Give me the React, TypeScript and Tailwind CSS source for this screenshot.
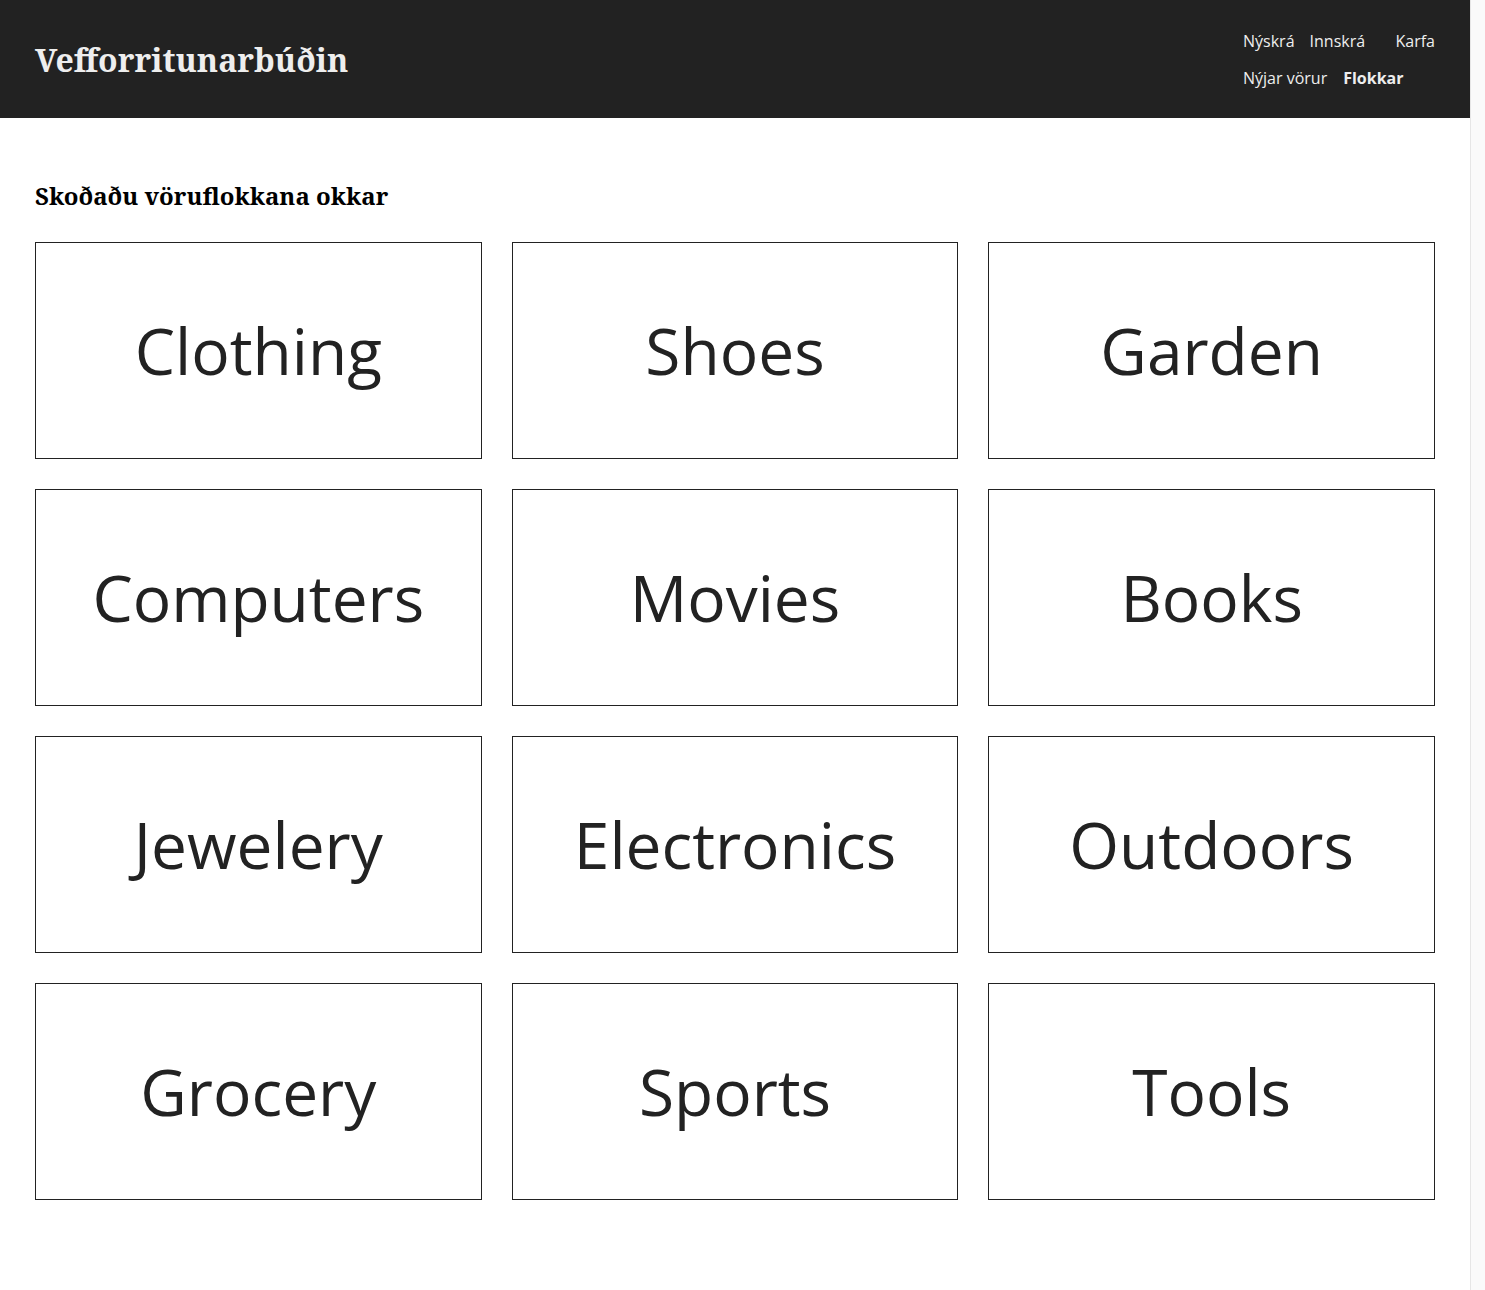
const categories = [
  "Clothing",
  "Shoes",
  "Garden",
  "Computers",
  "Movies",
  "Books",
  "Jewelery",
  "Electronics",
  "Outdoors",
  "Grocery",
  "Sports",
  "Tools",
];

const serif = "font-['Noto_Serif','DejaVu_Serif',serif]";

const Header = () => {
  return (
    <header className="bg-[#222222] h-[118px] px-[35px] flex items-center justify-between text-[#eeeeee]">
      <h1 className={`${serif} font-bold text-[32px] leading-none mt-[2px]`}>
        Vefforritunarbúðin
      </h1>
      <nav className="w-[192px] flex flex-col gap-[15px] text-[16px] leading-[22px]">
        <div className="flex justify-between">
          <div className="flex gap-[15px]">
            <a>Nýskrá</a>
            <a>Innskrá</a>
          </div>
          <a>Karfa</a>
        </div>
        <div className="flex gap-[16px]">
          <a>Nýjar vörur</a>
          <a className="font-bold">Flokkar</a>
        </div>
      </nav>
    </header>
  );
};

export default function App() {
  return (
    <div className="flex min-h-screen bg-white font-['Open_Sans',sans-serif] text-[#222222]">
      <div className="flex-1">
        <Header />
        <main className="px-[35px] pt-[62px] pb-[90px]">
          <h2 className={`${serif} font-bold text-[24px] leading-[32px] text-black mb-[30px]`}>
            Skoðaðu vöruflokkana okkar
          </h2>
          <div className="grid grid-cols-3 gap-[30px]">
            {categories.map((c) => (
              <a
                key={c}
                className="h-[217px] border border-[#222222] flex items-center justify-center text-[64px] leading-none"
              >
                {c}
              </a>
            ))}
          </div>
        </main>
      </div>
      <div className="w-[15px] shrink-0 bg-[#fafafa] border-l border-[#e6e6e6]" />
    </div>
  );
}
